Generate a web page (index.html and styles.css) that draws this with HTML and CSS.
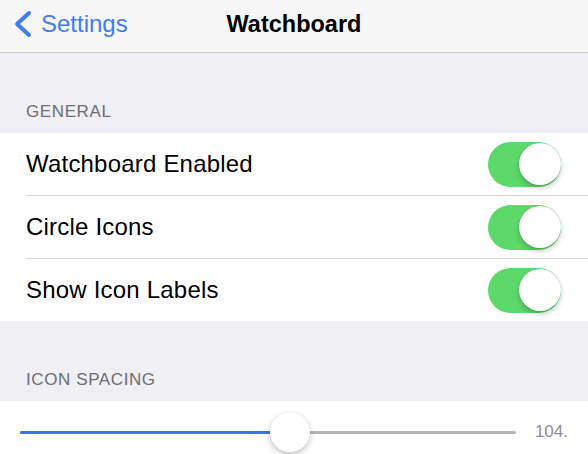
FILE: index.html
```html
<!DOCTYPE html>
<html lang="en">
<head>
    <meta charset="UTF-8">
    <meta name="viewport" content="width=device-width, initial-scale=1.0">
    <title>Watchboard</title>
    <link rel="stylesheet" href="styles.css">
</head>
<body>

    <div class="nav-bar">
        <div class="back-btn">
            <svg class="chevron" width="20" height="28" viewBox="0 0 20 28">
                <polyline points="16,3 4,14 16,25" fill="none" stroke="#407cf4" stroke-width="4" stroke-linecap="round" stroke-linejoin="round"/>
            </svg>
            <span>Settings</span>
        </div>
        <div class="nav-title">Watchboard</div>
        <div></div>
    </div>

    <div class="section-header">General</div>
    <div class="group">
        <div class="row">
            <span>Watchboard Enabled</span>
            <span class="toggle on"><span class="knob"></span></span>
        </div>
        <div class="row">
            <span>Circle Icons</span>
            <span class="toggle on"><span class="knob"></span></span>
        </div>
        <div class="row">
            <span>Show Icon Labels</span>
            <span class="toggle on"><span class="knob"></span></span>
        </div>
    </div>

    <div class="section-header">Icon Spacing</div>
    <div class="group">
        <div class="slider-row">
            <div class="track">
                <div class="track-fill"></div>
                <div class="slider-knob"></div>
            </div>
            <span class="slider-value">104.</span>
        </div>
    </div>

</body>
</html>
```

FILE: styles.css
```css
body {
    margin: 0;
    background-color: #efeff4;
    font-family: "Liberation Sans", Arial, sans-serif;
    color: #000;
}

.nav-bar {
    display: grid;
    grid-template-columns: 1fr auto 1fr;
    align-items: center;
    height: 52px;
    background-color: #f7f7f8;
    border-bottom: 1px solid #c8c7cc;
}

.back-btn {
    display: flex;
    align-items: center;
    gap: 8px;
    padding-left: 13px;
    color: #407cf4;
    font-size: 24px;
    line-height: 28px;
    margin-top: -5px;
}

.nav-title {
    font-size: 23.5px;
    font-weight: bold;
    line-height: 28px;
    margin-top: -5px;
}

.section-header {
    display: flex;
    align-items: flex-end;
    height: 80px;
    padding-left: 26px;
    padding-bottom: 11px;
    box-sizing: border-box;
    font-size: 17px;
    line-height: 20px;
    letter-spacing: 0.6px;
    color: #6d6d72;
    text-transform: uppercase;
}

.group {
    background-color: #fff;
}

.row {
    display: flex;
    align-items: center;
    justify-content: space-between;
    height: 62px;
    margin-left: 26px;
    padding-right: 27px;
    border-bottom: 1px solid #d9d9dd;
    font-size: 24px;
    letter-spacing: 0.2px;
}

.row:last-child {
    border-bottom: none;
}

.toggle {
    display: flex;
    justify-content: flex-end;
    align-items: center;
    width: 73px;
    height: 45px;
    padding: 2px 0;
    box-sizing: border-box;
    border-radius: 23px;
    background-color: #e5e5ea;
}

.toggle.on {
    background-color: #5cd96a;
}

.knob {
    width: 42px;
    height: 42px;
    border-radius: 50%;
    background-color: #fff;
    box-shadow: 0 3px 5px rgba(0, 0, 0, 0.22), 0 0 1px rgba(0, 0, 0, 0.2);
}

.slider-row {
    display: flex;
    align-items: center;
    gap: 19px;
    height: 62px;
    padding: 0 20px 0 20px;
}

.track {
    position: relative;
    flex: 1;
    height: 3px;
    border-radius: 2px;
    background-color: #b6b6b6;
}

.track-fill {
    width: 255px;
    height: 3px;
    border-radius: 2px;
    background-color: #3f72ee;
}

.slider-knob {
    position: absolute;
    left: 250px;
    top: -19px;
    width: 40px;
    height: 40px;
    border-radius: 50%;
    background-color: #fff;
    box-shadow: 0 3px 6px rgba(0, 0, 0, 0.22), 0 0 1px rgba(0, 0, 0, 0.15);
}

.slider-value {
    font-size: 17px;
    color: #8e8e93;
}
```
